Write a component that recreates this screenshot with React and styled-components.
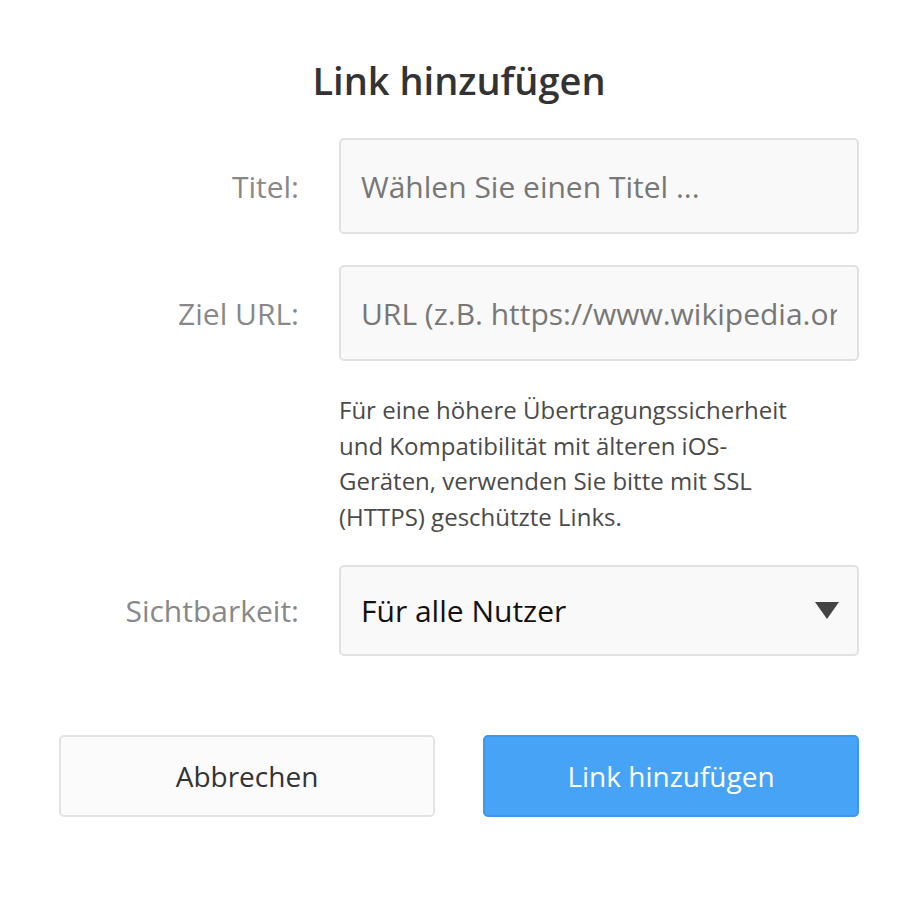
import React from "react";
import styled, { createGlobalStyle } from "styled-components";

const GlobalStyle = createGlobalStyle`
  html, body {
    margin: 0;
    padding: 0;
    background: #ffffff;
  }
  body {
    font-family: "Open Sans", "Noto Sans", "Liberation Sans", sans-serif;
  }
  * {
    box-sizing: border-box;
  }
`;

const Dialog = styled.div`
  width: 800px;
  margin: 0 auto;
  padding: 58px 0 0;
`;

const Heading = styled.h1`
  margin: 0 0 36px;
  text-align: center;
  font-size: 38px;
  line-height: 44px;
  font-weight: 600;
  color: #333333;
`;

const Form = styled.div`
  display: grid;
  grid-template-columns: 240px 1fr;
  column-gap: 40px;
  row-gap: 31px;
  align-items: center;
`;

const Label = styled.label`
  text-align: right;
  font-size: 30px;
  color: #888888;
`;

const Input = styled.input`
  width: 100%;
  height: 96px;
  padding: 0 20px;
  border: 2px solid #e1e1e1;
  border-radius: 5px;
  background: #f9f9f9;
  font-family: inherit;
  font-size: 30px;
  color: #222;
  outline: none;

  &::placeholder {
    color: #777777;
    opacity: 1;
  }
`;

const Hint = styled.p`
  grid-column: 2;
  margin: 0;
  padding-right: 40px;
  font-size: 24px;
  line-height: 35.5px;
  color: #4a4a4a;
`;

const SelectBox = styled.div`
  display: flex;
  align-items: center;
  justify-content: space-between;
  height: 91px;
  padding: 0 18px 0 20px;
  border: 2px solid #e1e1e1;
  border-radius: 5px;
  background: #f9f9f9;
  font-size: 30px;
  color: #111111;
`;

const Caret = styled.span`
  width: 0;
  height: 0;
  border-left: 12px solid transparent;
  border-right: 12px solid transparent;
  border-top: 17px solid #444444;
`;

const Actions = styled.div`
  display: flex;
  gap: 48px;
  margin-top: 79px;
`;

const Button = styled.button`
  flex: 1;
  height: 82px;
  border-radius: 5px;
  font-family: inherit;
  font-size: 28px;
  cursor: pointer;
  border: 2px solid ${(p) => (p.$primary ? "#3f97e8" : "#e3e3e3")};
  background: ${(p) => (p.$primary ? "#47a3f5" : "#fbfbfb")};
  color: ${(p) => (p.$primary ? "#ffffff" : "#333333")};
`;

export default function App() {
  return (
    <>
      <GlobalStyle />
      <Dialog>
        <Heading>Link hinzufügen</Heading>
        <Form>
          <Label>Titel:</Label>
          <Input placeholder="Wählen Sie einen Titel ..." />

          <Label>Ziel URL:</Label>
          <Input placeholder="URL (z.B. https://www.wikipedia.org)" />

          <Hint>
            Für eine höhere Übertragungssicherheit und Kompatibilität mit
            älteren iOS-Geräten, verwenden Sie bitte mit SSL (HTTPS)
            geschützte Links.
          </Hint>

          <Label>Sichtbarkeit:</Label>
          <SelectBox>
            Für alle Nutzer
            <Caret />
          </SelectBox>
        </Form>
        <Actions>
          <Button>Abbrechen</Button>
          <Button $primary>Link hinzufügen</Button>
        </Actions>
      </Dialog>
    </>
  );
}
